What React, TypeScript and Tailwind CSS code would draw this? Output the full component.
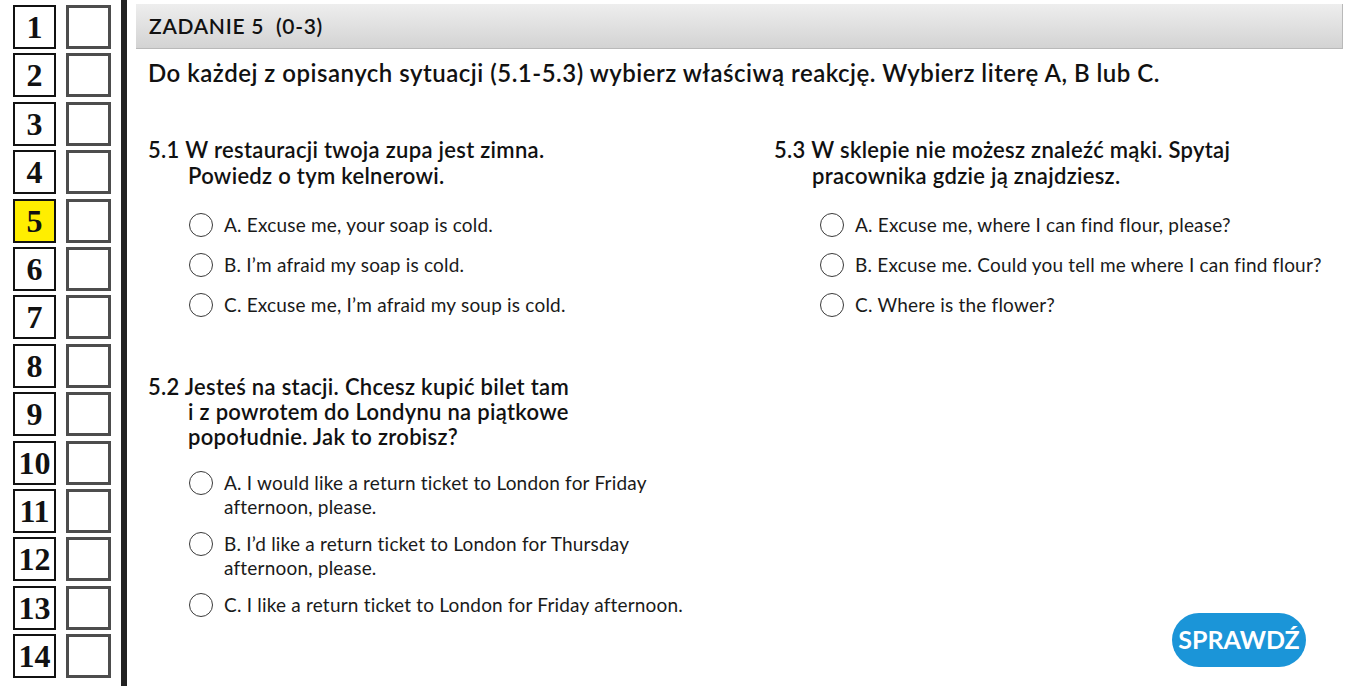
import React from "react";

const nums = Array.from({ length: 14 }, (_, i) => i + 1);

function Radio() {
  return (
    <span className="h-[24px] w-[24px] shrink-0 rounded-full border-[1.5px] border-[#3a3a3a] bg-white" />
  );
}

function Option({ children, right }: { children: React.ReactNode; right?: boolean }) {
  return (
    <div className={`flex items-start gap-[11px] ${right ? "pl-[46px]" : "pl-[41px]"}`}>
      <Radio />
      <div className="text-[19px] leading-[24px] tracking-[0.2px] text-[#1a1a1a]">{children}</div>
    </div>
  );
}

export default function App() {
  return (
    <div
      className="flex h-[686px] w-[1348px] overflow-hidden bg-white text-[#111]"
      style={{ fontFamily: "Lato, 'Open Sans', sans-serif" }}
    >
      {/* Sidebar */}
      <div className="w-[121px] shrink-0 pl-[13px] pt-[5px]">
        <div className="grid grid-cols-[43px_45px] gap-x-[10px] gap-y-[4.4px]">
          {nums.map((n) => (
            <React.Fragment key={n}>
              <div
                className={`flex h-[44px] items-center justify-center border-2 border-[#111] text-[32px] font-bold leading-none ${
                  n === 5 ? "bg-[#ffee00]" : "bg-white"
                }`}
                style={{ fontFamily: "'Liberation Serif', 'Times New Roman', serif" }}
              >
                {n}
              </div>
              <div className="h-[44px] border-[3px] border-[#4d4d4d] bg-white" />
            </React.Fragment>
          ))}
        </div>
      </div>

      {/* Divider */}
      <div className="w-[6px] shrink-0 bg-[#222]" />

      {/* Main */}
      <div className="relative flex-1 pl-[9px] pr-[5px] pt-[4px]">
        <div className="flex h-[45px] items-center border-b border-r border-[#b9b9b9] bg-linear-to-b from-[#eeeeee] to-[#d3d3d3] pl-[13px]">
          <span className="whitespace-pre text-[21px] font-semibold tracking-[0.7px] text-[#111]">ZADANIE 5  (0-3)</span>
        </div>

        <div className="pl-[12px]">
          <div className="mt-[10px] text-[24px] font-semibold leading-[28px] tracking-[0.5px] text-[#111]">
            Do każdej z opisanych sytuacji (5.1-5.3) wybierz właściwą reakcję. Wybierz literę A, B lub C.
          </div>

          <div className="mt-[50px] grid grid-cols-[626px_1fr]">
            {/* Left column */}
            <div>
              <div className="pl-[40px] -indent-[40px] text-[22px] font-semibold leading-[26px] tracking-[0.3px] text-[#111]">
                5.1 W restauracji twoja zupa jest zimna.
                <br />
                Powiedz o tym kelnerowi.
              </div>
              <div className="mt-[24px] flex flex-col gap-[16px]">
                <Option>A. Excuse me, your soap is cold.</Option>
                <Option>B. I’m afraid my soap is cold.</Option>
                <Option>C. Excuse me, I’m afraid my soup is cold.</Option>
              </div>

              <div className="mt-[57px] pl-[40px] -indent-[40px] text-[22px] font-semibold leading-[25px] tracking-[0.3px] text-[#111]">
                5.2 Jesteś na stacji. Chcesz kupić bilet tam
                <br />
                i z powrotem do Londynu na piątkowe
                <br />
                popołudnie. Jak to zrobisz?
              </div>
              <div className="mt-[22px] flex flex-col gap-[13px]">
                <Option>
                  A. I would like a return ticket to London for Friday
                  <br />
                  afternoon, please.
                </Option>
                <Option>
                  B. I’d like a return ticket to London for Thursday
                  <br />
                  afternoon, please.
                </Option>
                <Option>C. I like a return ticket to London for Friday afternoon.</Option>
              </div>
            </div>

            {/* Right column */}
            <div>
              <div className="pl-[38px] -indent-[38px] text-[22px] font-semibold leading-[26px] tracking-[0.3px] text-[#111]">
                5.3 W sklepie nie możesz znaleźć mąki. Spytaj
                <br />
                pracownika gdzie ją znajdziesz.
              </div>
              <div className="mt-[24px] flex flex-col gap-[16px]">
                <Option right>A. Excuse me, where I can find flour, please?</Option>
                <Option right>B. Excuse me. Could you tell me where I can find flour?</Option>
                <Option right>C. Where is the flower?</Option>
              </div>
            </div>
          </div>
        </div>

        <button className="absolute bottom-[19px] right-[42px] flex h-[54px] w-[134px] items-center justify-center rounded-full bg-[#1b95d8] text-[25px] font-bold text-white">
          SPRAWDŹ
        </button>
      </div>
    </div>
  );
}
